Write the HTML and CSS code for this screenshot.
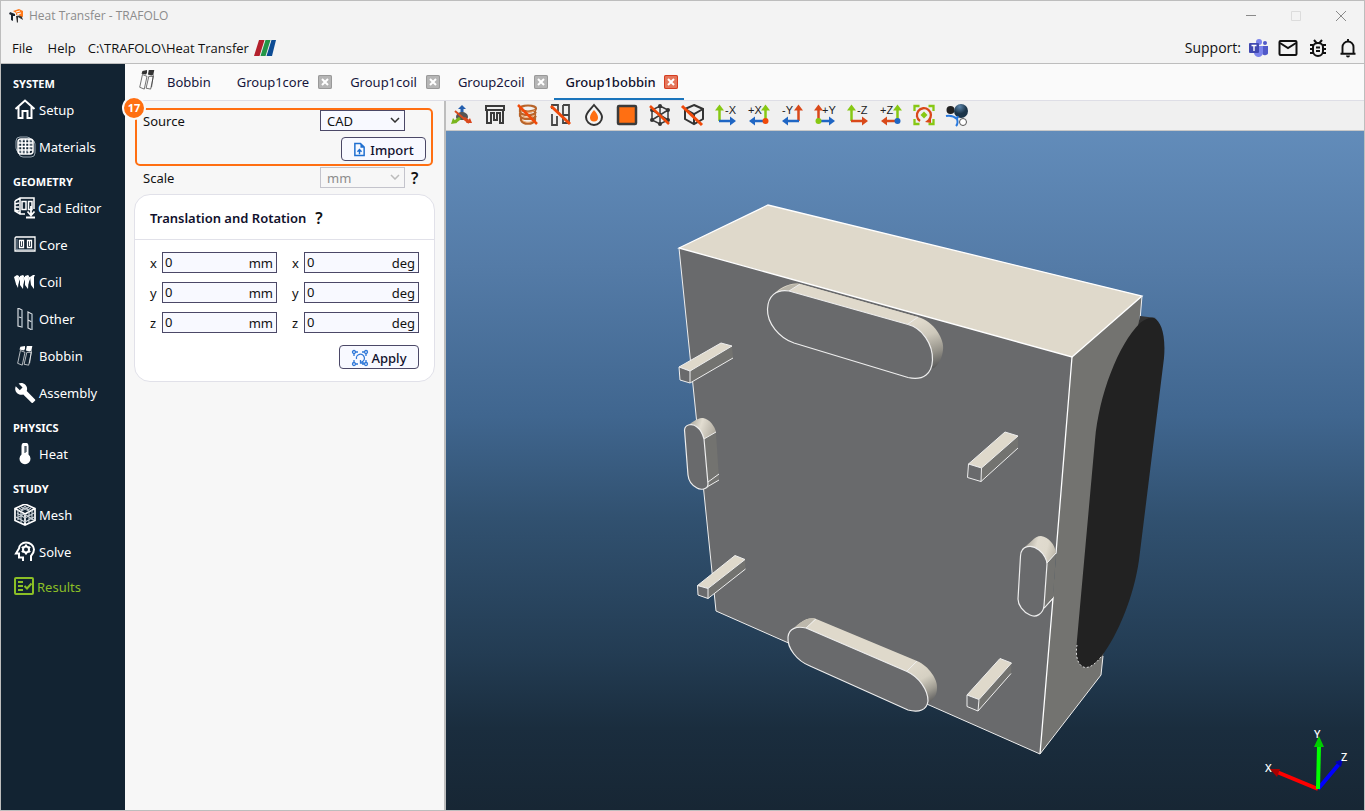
FILE: index.html
```html
<!DOCTYPE html>
<html lang="en">
<head>
<meta charset="utf-8">
<title>Heat Transfer - TRAFOLO</title>
<link rel="stylesheet" href="styles.css">
</head>
<body>
<svg class="defs" aria-hidden="true">
  <symbol id="bobbin" viewBox="0 0 22 24">
    <path d="M6 2l5-1 0 3-1 2-5-1zM13 1l6 0-1 5-2 1-4-1z" fill="currentColor"/>
    <path d="M6 6l-3 14 5 2 3-14zM13 8l-3 13 5 1 3-14zM18 6l-2 14" fill="none" stroke="currentColor" stroke-width="1" opacity=".75"/>
  </symbol>
</svg>
<div class="window">
  <header class="titlebar">
    <svg class="logo" viewBox="0 0 16 16"><path d="M1 4l5 2 0 2-2 0 0 5-2-1V7L0 6z" fill="#1c2530"/><path d="M7 8l1 7 1-1V9l5 3-1-3 1-2z" fill="#333"/><path d="M4 3l6-2 4 2v6l-3-1-1-2-3 1V5z" fill="#ff7a1a"/><path d="M7 4l4-1M8 6l4-1" stroke="#fff" stroke-width="1"/></svg>
    <span class="title">Heat Transfer - TRAFOLO</span>
    <div class="wincontrols">
      <button aria-label="Minimize"><svg viewBox="0 0 12 12"><path d="M1 5.500h10" stroke="#8a8a8a"/></svg></button>
      <button aria-label="Maximize"><svg viewBox="0 0 12 12"><path d="M1.500 1.500h9v9h-9z" fill="none" stroke="#dcdcdc"/></svg></button>
      <button aria-label="Close"><svg viewBox="0 0 12 12"><path d="M1 1l10 10M11 1L1 11" stroke="#8a8a8a"/></svg></button>
    </div>
  </header>
  <nav class="menubar">
    <button>File</button>
    <button>Help</button>
    <span class="path">C:\TRAFOLO\Heat Transfer</span>
    <svg class="stripes" viewBox="0 0 22 16"><path d="M5 0h6L6 16H0z" fill="#b3202c"/><path d="M11 0h6l-5 16H6z" fill="#229647"/><path d="M17 0h5l-4 16h-6z" fill="#0d4c94"/><path d="M11 0L6 16M17 0l-5 16" stroke="#e8e8e8" stroke-width="1"/></svg>
    <div class="support">
      <span>Support:</span>
      <a href="#" aria-label="Teams"><svg viewBox="0 0 20 20"><circle cx="11" cy="4" r="3" fill="#7b83eb"/><circle cx="17" cy="5" r="2" fill="#5059c9"/><path d="M14 8h6v5a3 3 0 0 1-6 2z" fill="#5059c9"/><path d="M6 8h9v6a4.500 4.500 0 0 1-9 1z" fill="#7b83eb"/><rect x="1" y="5" width="10" height="10" rx="1" fill="#4048b0"/><path d="M3.500 7.500h5M6 7.500v5.500" stroke="#fff" stroke-width="1.400"/></svg></a>
      <a href="#" aria-label="Mail"><svg viewBox="0 0 20 20"><rect x="1.500" y="3" width="17" height="14" rx="1" fill="none" stroke="#111" stroke-width="2"/><path d="M2 5l8 5 8-5" fill="none" stroke="#111" stroke-width="2"/></svg></a>
      <a href="#" aria-label="Report a bug"><svg viewBox="0 0 20 20"><path d="M10 5c3 0 5 2 5 4v4a5 5 0 0 1-10 0V9c0-2 2-4 5-4zM6 2l2.500 3M14 2l-2.500 3M2 7h3M15 7h3M2 11h3M15 11h3M2 15h4M14 15h4" fill="none" stroke="#111" stroke-width="2"/><path d="M8 9.500h4M8 13h4" stroke="#111" stroke-width="1.800"/></svg></a>
      <a href="#" aria-label="Notifications"><svg viewBox="0 0 20 20"><path d="M4.500 15.500V9a5.500 5.500 0 0 1 11 0v6.500M2.500 15.800h15M10 1v3" fill="none" stroke="#111" stroke-width="1.900"/><path d="M8 17.500h4a2 2 0 0 1-4 0z" fill="#111"/></svg></a>
    </div>
  </nav>
  <div class="body">
    <nav class="sidebar">
      <h2>SYSTEM</h2>
      <a href="#"><svg viewBox="0 0 22 22"><path d="M1.500 10L11 1.500l9.500 8.500M4.500 8v11h4v-7h5v7h4V8" fill="none" stroke="#fff" stroke-width="2"/></svg>Setup</a>
      <a href="#"><svg viewBox="0 0 22 22"><rect x="2" y="1" width="15" height="15" rx="4" fill="none" stroke="#9aa7b1"/><rect x="5" y="4" width="16" height="17" rx="4" fill="none" stroke="#9aa7b1"/><rect x="4" y="3" width="15" height="15" rx="3" fill="none" stroke="#fff" stroke-width="1.500"/><path d="M4 7h15M4 10.500h15M4 14h15M8 3v15M11.500 3v15M15 3v15" stroke="#fff" stroke-width="1.500"/></svg>Materials</a>
      <h2>GEOMETRY</h2>
      <a href="#" class="tight"><svg viewBox="0 0 22 22"><path d="M1 4l5-3h14v11M1 4v10l5 3h5M6 1v16M1 7l4-1M1 10h4M1 13l4 1" fill="none" stroke="#fff" stroke-width="1.500"/><path d="M8 4.500h4v8H8zM14.500 4.500H18v8h-3.500z" fill="none" stroke="#fff" stroke-width="1.500"/><path d="M17 9v9M13.500 14.500l3.500 4 3.500-4M12 20.500h9" fill="none" stroke="#fff" stroke-width="1.800"/></svg>Cad Editor</a>
      <a href="#"><svg viewBox="0 0 22 22"><path d="M2 3h19v14H1V4z" fill="none" stroke="#fff" stroke-width="1.300"/><path d="M2 15.500h18M3 5v10" stroke="#8595a1"/><path d="M5.500 6.500h4v7h-4zM13.500 6.500h4v7h-4z" fill="none" stroke="#fff" stroke-width="1.300"/><path d="M7.500 7v5M15.500 7v5" stroke="#fff"/></svg>Core</a>
      <a href="#"><svg viewBox="0 0 22 22"><path d="M0 6l3-2 2 1-1 12-2-4zM6 5l3-1 1 1-1 13-3-4zM11 5l3-1 1 1-1 13-3-4zM16 6l3-2h2l-1 2 0 12-3-4z" fill="#fff"/><path d="M3 14L6 6M8 14l3-8M13 14l3-8" stroke="#fff" stroke-width="1.500"/></svg>Coil</a>
      <a href="#"><svg viewBox="0 0 22 22"><path d="M4 0l4 2v17l-4-1zM5 9l3 1M14 4l4 2v16l-4-2zM14 12l4 2" fill="none" stroke="#d8dde2" stroke-width="1.200"/><path d="M8 2v17M18 6v16" stroke="#718391"/></svg>Other</a>
      <a href="#"><svg viewBox="0 0 22 24"><use href="#bobbin"/></svg>Bobbin</a>
      <a href="#"><svg viewBox="0 0 24 24"><path fill="#fff" d="M23 19l-9.100-9.100c.9-2.300.4-5-1.500-6.900-2-2-5-2.400-7.400-1.300L9.300 6 6.300 9 1.900 4.700C.8 7.100 1.200 10.100 3.200 12.100c1.900 1.900 4.600 2.400 6.900 1.500l9.100 9.100c.4.4 1 .4 1.400 0l2.300-2.300c.5-.4.5-1 .1-1.400z"/></svg>Assembly</a>
      <h2>PHYSICS</h2>
      <a href="#"><svg viewBox="0 0 22 22"><path d="M7.500 3a3.500 3.500 0 0 1 7 0v8.500a5.500 5.500 0 1 1-7 0z" fill="#fff"/><path d="M11 3v7M11 4h2M11 6h2M11 8h2" stroke="#1b2b39" stroke-width="1"/></svg>Heat</a>
      <h2>STUDY</h2>
      <a href="#"><svg viewBox="0 0 22 22"><path d="M11 0l10 4.500v12L11 21 1 16.500v-12zM1 4.500L11 10l10-5.500M11 10v11" fill="none" stroke="#fff" stroke-width="1.700"/><path d="M5 4l3 2 3-4 3 4 3-2M4 6v10M7 8v11M3 9l8 5M2 13l9 5M3 14l7-4M15 8v11M18 6v10M11 14l9-5M11 18l9-5M12 11l8 5M7 3l8 4M15 3L7 7" fill="none" stroke="#c5cdd3" stroke-width="1.200"/></svg>Mesh</a>
      <a href="#"><svg viewBox="0 0 22 22"><path d="M17 20v-5c2-2 3-4 3-6.500C20 4.500 16 1.500 12 1.500S5 4.500 5 7.500l-3 5h3v4h4V20" fill="none" stroke="#fff" stroke-width="2"/><circle cx="12" cy="8.500" r="3" fill="none" stroke="#fff" stroke-width="2"/><path d="M12 3.500v2M12 11.500v2M7.700 6l1.700 1M14.600 10l1.700 1M7.700 11l1.700-1M14.600 7l1.700-1" stroke="#fff" stroke-width="2"/></svg>Solve</a>
      <a href="#" class="results"><svg viewBox="0 0 22 22"><rect x="2" y="2" width="18" height="16" rx="1" fill="none" stroke="currentColor" stroke-width="2"/><path d="M5 6h5M5 10h5M5 14h5M11.500 10l2.500 2.500 4.500-5" fill="none" stroke="currentColor" stroke-width="2"/></svg>Results</a>
    </nav>
    <main class="main">
      <div class="tabs">
        <svg class="tabicon" viewBox="0 0 22 24"><use href="#bobbin"/></svg>
        <div class="tab"><button class="name">Bobbin</button></div>
        <div class="tab"><button class="name">Group1core</button><button class="x" aria-label="Close Group1core"><svg viewBox="0 0 14 14"><path d="M4 4l6 6M10 4l-6 6"/></svg></button></div>
        <div class="tab"><button class="name">Group1coil</button><button class="x" aria-label="Close Group1coil"><svg viewBox="0 0 14 14"><path d="M4 4l6 6M10 4l-6 6"/></svg></button></div>
        <div class="tab"><button class="name">Group2coil</button><button class="x" aria-label="Close Group2coil"><svg viewBox="0 0 14 14"><path d="M4 4l6 6M10 4l-6 6"/></svg></button></div>
        <div class="tab active"><button class="name">Group1bobbin</button><button class="x" aria-label="Close Group1bobbin"><svg viewBox="0 0 14 14"><path d="M4 4l6 6M10 4l-6 6"/></svg></button></div>
      </div>
      <div class="work">
        <section class="panel">
          <div class="source">
            <span class="badge">17</span>
            <div class="row"><label for="source">Source</label>
              <div class="selectwrap"><select id="source"><option>CAD</option></select><svg viewBox="0 0 10 6"><path d="M1 1l4 4 4-4"/></svg></div></div>
            <button class="btn import"><svg viewBox="0 0 14 16"><path d="M2 1.500h6l4 4v9H2z" fill="none" stroke="#1f6fd0" stroke-width="1.600"/><path d="M8 1v5h4z" fill="#1f6fd0"/><path d="M7 13V8.500M4.800 10.500L7 8l2.200 2.500" fill="none" stroke="#1f6fd0" stroke-width="1.500"/></svg>Import</button>
          </div>
          <div class="scale row"><label for="scale">Scale</label>
            <div class="selectwrap off"><select id="scale" disabled><option>mm</option></select><svg viewBox="0 0 10 6"><path d="M1 1l4 4 4-4"/></svg></div>
            <button class="help" aria-label="Scale help">?</button></div>
          <section class="card">
            <header><h3>Translation and Rotation</h3><button class="help">?</button></header>
            <div class="fields">
              <label for="tx">x</label><div class="num"><input id="tx" value="0"><span>mm</span></div>
              <label for="rx">x</label><div class="num"><input id="rx" value="0"><span>deg</span></div>
              <label for="ty">y</label><div class="num"><input id="ty" value="0"><span>mm</span></div>
              <label for="ry">y</label><div class="num"><input id="ry" value="0"><span>deg</span></div>
              <label for="tz">z</label><div class="num"><input id="tz" value="0"><span>mm</span></div>
              <label for="rz">z</label><div class="num"><input id="rz" value="0"><span>deg</span></div>
            </div>
            <button class="btn apply"><svg viewBox="0 0 18 18"><g fill="none" stroke="#2f78d8" stroke-width="1.300"><circle cx="3" cy="3" r="1.500"/><circle cx="15" cy="3" r="1.500"/><circle cx="3" cy="15" r="1.500"/><circle cx="15" cy="15" r="1.500"/><path d="M5 3h2M11 3h2M5 15h2M11 15h2M3 5v2M3 11v2M15 5v2M15 11v2"/><path d="M5.500 10a4 4 0 1 1 5 3M9.500 11v3h3.500"/></g></svg>Apply</button>
          </section>
        </section>
        <section class="view">
          <div class="toolbar">
            <button aria-label="Axes"><svg viewBox="0 0 22 22"><path d="M11 8V5" stroke="#245fae" stroke-width="3"/><path d="M7 5l4-4 4 4z" fill="#245fae"/><path d="M5 13c0-3 3-5 6-5s6 2 6 5-4 3-6 3-6 0-6-3z" fill="#555"/><path d="M9 14l-5 4" stroke="#79b51c" stroke-width="3"/><path d="M0 20l2-6 4 5z" fill="#79b51c"/><path d="M13 14l4 3" stroke="#d9451d" stroke-width="3"/><path d="M21 19l-6 0 4-5z" fill="#d9451d"/><path d="M4 7l14 12" stroke="#d94a1c" stroke-width="2"/></svg></button>
            <button aria-label="Core"><svg viewBox="0 0 22 22"><path d="M2 2h18v4H2zM3 6v13h4V9h3v7h3V9h3v10h3V6" fill="none" stroke="#3b3b3b" stroke-width="2"/></svg></button>
            <button aria-label="Coil"><svg viewBox="0 0 22 22"><g fill="none" stroke="#b8642a" stroke-width="2.200"><ellipse cx="11" cy="4.500" rx="8" ry="3"/><path d="M3 5v3c2 4 14 4 16 0M3 9v3c2 4 14 4 16 0M4 13v3c2 5 12 5 14 0V6"/></g><path d="M4 6c3 3 11 3 14 0M4 11c3 3 11 3 14 0M5 16c3 3 9 3 12 0" fill="none" stroke="#f0a160"/><path d="M1 1l19 19" stroke="#f04a0a" stroke-width="2.500"/></svg></button>
            <button aria-label="Other parts"><svg viewBox="0 0 22 22"><path d="M2 5V1h6v8M2 10v11h5v-9M13 1h6v18h-6v-8h6M13 1v10" fill="none" stroke="#444" stroke-width="1.800"/><path d="M1 2l19 18" stroke="#f04a0a" stroke-width="3"/></svg></button>
            <button aria-label="Heat"><svg viewBox="0 0 22 22"><path d="M11 1c4 5 8 8 8 12a8 8 0 0 1-16 0c0-4 4-7 8-12z" fill="#f5f5f5" stroke="#333" stroke-width="2"/><path d="M11 6c2.500 3 4 5 4 7.500a4 4 0 0 1-8 0c0-2.500 1.500-4.500 4-7.500z" fill="#ff6f12"/></svg></button>
            <button aria-label="Surface"><svg viewBox="0 0 22 22"><rect x="2" y="2" width="18" height="18" rx="1" fill="#ff6f12" stroke="#3b3b3b" stroke-width="2.500"/></svg></button>
            <button aria-label="Mesh"><svg viewBox="0 0 22 22"><path d="M11 2l8 4v10l-8 4-8-4V6zM3 6l8 5 8-5M11 11v9M3 16l8-5 8 5M11 2v9" fill="none" stroke="#3b3b3b" stroke-width="1.500"/><g fill="#333"><circle cx="11" cy="2" r="2"/><circle cx="19" cy="6" r="2"/><circle cx="19" cy="16" r="2"/><circle cx="11" cy="20" r="2"/><circle cx="3" cy="16" r="2"/><circle cx="3" cy="6" r="2"/></g><path d="M1 2l19 18" stroke="#f04a0a" stroke-width="2.500"/></svg></button>
            <button aria-label="Wireframe"><svg viewBox="0 0 22 22"><path d="M12 1l9 4v10l-9 5-9-5V5zM3 5l9 5 9-5M12 10v10" fill="none" stroke="#333" stroke-width="2"/><path d="M0 2l20 19" stroke="#f04a0a" stroke-width="3"/></svg></button>
            <button aria-label="View -X"><svg viewBox="0 0 22 22"><path d="M4.500 17V5" stroke="#87c814" stroke-width="2.500"/><path d="M0 6.500l4.500-6 4.500 6z" fill="#87c814"/><path d="M4 17h13" stroke="#1f66c4" stroke-width="2.500"/><path d="M15 12.500l6 4.500-6 4.500z" fill="#1f66c4"/><text x="10" y="10">-X</text></svg></button>
            <button aria-label="View +X"><svg viewBox="0 0 22 22"><path d="M17.500 17V5" stroke="#87c814" stroke-width="2.500"/><path d="M13 6.500l4.500-6 4.500 6z" fill="#87c814"/><path d="M17 17H5" stroke="#1f66c4" stroke-width="2.500"/><path d="M7 12.500L1 17l6 4.500z" fill="#1f66c4"/><circle cx="17.500" cy="17" r="3" fill="#f04a0a"/><text x="0" y="10">+X</text></svg></button>
            <button aria-label="View -Y"><svg viewBox="0 0 22 22"><path d="M17.500 17V5" stroke="#d9491a" stroke-width="2.500"/><path d="M13 6.500l4.500-6 4.500 6z" fill="#d9491a"/><path d="M18 17H5" stroke="#1f66c4" stroke-width="2.500"/><path d="M7 12.500L1 17l6 4.500z" fill="#1f66c4"/><text x="1" y="10">-Y</text></svg></button>
            <button aria-label="View +Y"><svg viewBox="0 0 22 22"><path d="M4.500 17V5" stroke="#d9491a" stroke-width="2.500"/><path d="M0 6.500l4.500-6 4.500 6z" fill="#d9491a"/><path d="M4 17h13" stroke="#1f66c4" stroke-width="2.500"/><path d="M15 12.500l6 4.500-6 4.500z" fill="#1f66c4"/><circle cx="4.500" cy="17" r="3" fill="#87c814"/><text x="8" y="10">+Y</text></svg></button>
            <button aria-label="View -Z"><svg viewBox="0 0 22 22"><path d="M4.500 17V5" stroke="#87c814" stroke-width="2.500"/><path d="M0 6.500l4.500-6 4.500 6z" fill="#87c814"/><path d="M4 17h13" stroke="#d9491a" stroke-width="2.500"/><path d="M15 12.500l6 4.500-6 4.500z" fill="#d9491a"/><text x="10" y="10">-Z</text></svg></button>
            <button aria-label="View +Z"><svg viewBox="0 0 22 22"><path d="M17.500 17V5" stroke="#87c814" stroke-width="2.500"/><path d="M13 6.500l4.500-6 4.500 6z" fill="#87c814"/><path d="M17 17H5" stroke="#d9491a" stroke-width="2.500"/><path d="M7 12.500L1 17l6 4.500z" fill="#d9491a"/><circle cx="17.500" cy="17" r="3" fill="#1f66c4"/><text x="0" y="10">+Z</text></svg></button>
            <button aria-label="Fit view"><svg viewBox="0 0 22 22"><path d="M1.500 7V2h5M15.500 2h5v5M1.500 15v5h5M15.500 20h5v-5" fill="none" stroke="#87c814" stroke-width="2.300"/><path d="M11 7.500l3.500 3.500-3.500 3.500L7.500 11z" fill="#87c814"/><path d="M7 17a7 7 0 1 1 9-1" fill="none" stroke="#d9491a" stroke-width="2.300"/><path d="M12 18l6-5v6z" fill="#d9491a"/></svg></button>
            <button aria-label="Background"><svg viewBox="0 0 22 22"><defs><radialGradient id="ball" cx=".4" cy=".2"><stop offset="0" stop-color="#5c86ac"/><stop offset="1" stop-color="#1b3448"/></radialGradient></defs><circle cx="4.500" cy="6" r="4" fill="#222"/><circle cx="15" cy="7" r="7" fill="url(#ball)"/><circle cx="17" cy="18" r="3.500" fill="#fff" stroke="#555"/><path d="M0 12c5-1 9 1 11 3M11 15c1 3 1 5-1 7M11 15l1-3" fill="none" stroke="#2879df" stroke-width="2"/></svg></button>
          </div>
          <div class="canvas">
            <svg class="model" viewBox="446 131 918 679" role="img" aria-label="Bobbin model">
              <defs>
                <linearGradient id="c1" gradientUnits="userSpaceOnUse" x1="925" y1="320" x2="941" y2="368"><stop offset="0" stop-color="#dfd9cb"/><stop offset=".3" stop-color="#cdc8bb"/><stop offset=".65" stop-color="#96938a"/><stop offset="1" stop-color="#505153"/></linearGradient>
                <linearGradient id="c2" gradientUnits="userSpaceOnUse" x1="913" y1="664" x2="934" y2="702"><stop offset="0" stop-color="#dfd9cb"/><stop offset=".4" stop-color="#d5d0c2"/><stop offset=".7" stop-color="#a19e94"/><stop offset="1" stop-color="#59595a"/></linearGradient>
                <linearGradient id="c3" gradientUnits="userSpaceOnUse" x1="688" y1="426" x2="716" y2="436"><stop offset="0" stop-color="#aaa79d"/><stop offset=".4" stop-color="#e2ddd1"/><stop offset="1" stop-color="#aaa59a"/></linearGradient>
                <linearGradient id="c4" gradientUnits="userSpaceOnUse" x1="1022" y1="546" x2="1056" y2="555"><stop offset="0" stop-color="#9a978e"/><stop offset=".4" stop-color="#e0dbcf"/><stop offset=".7" stop-color="#ded9cc"/><stop offset="1" stop-color="#bbb6a9"/></linearGradient>
              </defs>
              <path class="side" d="M1072 357l70-61-41 379-61 79z"/>
              <path class="front" d="M679 248l393 109-32 397-324-143z"/>
              <path class="top" d="M679 248l89-43 374 91-70 61z"/>
              <path class="edge" d="M679 248l89-43 374 91-70 61z"/>
              <path class="edge" d="M1072 357l-16 196-9 10M1044 608l9-10-13 156"/>
              <path class="thin" d="M679 248l37 363 324 143 61-79 2-19M1142 296l-2 24"/>
              <path d="M1140 316l16 2-18 8z" fill="#333"/>
              <path d="M1154 318C1161 321 1166 335 1164 358L1139 560C1134 596 1118 635 1101 657C1092 668 1084 671 1079 663C1076 658 1076 650 1077 640L1095 440C1099 395 1118 345 1140 323C1145 319 1150 317 1154 318Z" fill="#222"/>
              <path d="M1101 657C1092 668 1084 671 1079 663C1076 658 1076 650 1077 645" fill="none" stroke="#ddd" stroke-dasharray="2 2"/>
              <path d="M774 294C780 288 790 282 800 284L918 317C934 321 945 340 943 350C942 358 939 364 934 368L908 377Z" fill="url(#c1)"/>
              <path class="top" d="M789 291l11-7 118 33-10 7.500z"/>
              <path d="M771 297C777 291 787 283 800 284l-11 7z" fill="#b9b5a9"/>
              <path class="thin" d="M789 291l11-7M908 324l10-7"/>
              <path class="front edge2" d="M789 291L908 324.500C922 328 933 344 932.500 360C932 373 924 381 908 377.500L794 343C779 338 767 323 767.500 309C768 296 776 289 789 291Z"/>
              <path d="M791 632C797 624 806 617 815 618.500L917 661C929 666 938 680 937 688C937 695 934 699 928 704L907 705Z" fill="url(#c2)"/>
              <path d="M791 632C797 624 806 617 815 618.500l-9 9.500z" fill="#bdb8ac"/>
              <path class="thin" d="M806 628l10-9M907 671l10-10"/>
              <path class="front edge2" d="M806 628L907 671.500C919 677 928 690 928 701C927 710 919 713 908 710L810 666C797 661 787 648 788 637C789 628 797 626 806 628Z"/>
              <path class="side" d="M700 430l16 3 3 46-11 9z"/>
              <path d="M686 426C692 423 698 417 703 418C710 419 715 427 716 432L704 439Z" fill="url(#c3)"/>
              <path class="thin" d="M704 439l12-7M708 482l11-8M707 487l12-7"/>
              <path class="front edge2" d="M684.500 430C685 424 693 423 697 427C701 430 703 435 704 439L708 484C708 490 700 490 697 488C691 485 688.500 480 688 475Z"/>
              <path class="side" d="M1047 563l9-10-3 45-9 10z"/>
              <path d="M1022 549C1030 544 1034 536 1041 536C1049 537 1055 545 1056 553L1047 563Z" fill="url(#c4)"/>
              <path class="thin" d="M1056 553l-9 10M1044 608l9-10"/>
              <path class="front edge2" d="M1020.500 556C1021 545 1032 544 1039 550C1044 554 1047 560 1047 564L1044 606C1043 614 1036 618 1030 615C1023 612 1018 605 1018 599Z"/>
              <g class="pin"><path class="side" d="M690 371l42-25 1 12-43 25z"/><path class="top" d="M679 367l42-24 11 3-42 25z"/><path class="front" d="M679 367l11 4v12l-10-3z"/><path class="thin" d="M690 383l43-25"/></g>
              <g class="pin"><path class="side" d="M981.500 468l36.500-32v12l-37 33.500z"/><path class="top" d="M968.500 464l36.500-32 13 4-36.500 32z"/><path class="front" d="M968.500 464l13 4-.5 13.500-13.500-4z"/><path class="thin" d="M981 481.500l37-33.500"/></g>
              <g class="pin"><path class="side" d="M708 588.500l37-29 .5 9.500-37.500 29.500z"/><path class="top" d="M697.500 585.500l37.500-30 10 4-37 29z"/><path class="front" d="M697.500 585.500l10.500 3v10l-10-3.500z"/><path class="thin" d="M708 598.500l37.500-29.500"/></g>
              <g class="pin"><path class="side" d="M979 699.500l32.500-36.500-.5 10.500-33 37.500z"/><path class="top" d="M967 695l33-36.500 11.500 4.500-32.500 36.500z"/><path class="front" d="M967 695l12 4.500-1 11.500-11-4.500z"/><path class="thin" d="M978 711l33-37.500"/></g>
            </svg>
            <svg class="axes" viewBox="0 0 120 91" role="img" aria-label="Axes"><path d="M74 70l21-25" stroke="#00f" stroke-width="4"/><path d="M99 40l-8 3 6 5z" fill="#0000b5"/><path d="M74 70L33 53" stroke="#f00" stroke-width="4"/><path d="M26 50l10 0-3 8z" fill="#a00"/><path d="M74 70l1-43" stroke="#0f0" stroke-width="4"/><path d="M75 17l5 11H70z" fill="#0c0"/><text x="21" y="53">X</text><text x="70" y="19">Y</text><text x="97" y="42">Z</text></svg>
          </div>
        </section>
      </div>
    </main>
  </div>
</div>
</body>
</html>
```

FILE: styles.css
```css
* { box-sizing: border-box; }
body { margin: 0; font: 13px/18px "Noto Sans", sans-serif; color: #111; }
button, input, select { font: inherit; color: inherit; }
button { border: 0; background: none; padding: 0; }
a { color: inherit; text-decoration: none; }
h2, h3 { margin: 0; }
svg { display: block; }
.defs { display: none; }
.window { height: 100vh; display: flex; flex-direction: column; border: 1px solid #bdbdbd; background: #f3f3f3; }

.titlebar { height: 30px; display: flex; align-items: center; padding: 0 17px 0 8px; font-family: "Open Sans", sans-serif; font-size: 12px; color: #8c8c8c; }
.logo { width: 16px; height: 16px; margin-right: 4px; }
.wincontrols { margin-left: auto; display: flex; gap: 33px; }
.wincontrols svg { width: 12px; height: 12px; }

.menubar { height: 33px; display: flex; align-items: center; padding: 1px 6px 0 11px; border-bottom: 1px solid #bdbdbd; font-family: "Open Sans", sans-serif; }
.menubar > button { margin-right: 15px; }
.path { margin: 0 5px 0 -3px; }
.stripes { width: 22px; height: 16px; }
.support { margin-left: auto; display: flex; align-items: center; gap: 10px; font-size: 14px; }
.support span { margin-right: -3px; }
.support svg { width: 20px; height: 20px; }

.body { flex: 1; display: flex; min-height: 0; }
.sidebar { width: 124px; flex: none; background: #122332; color: #fff; padding: 3px 0 0 12px; }
.sidebar h2 { height: 24px; padding-top: 9px; font-size: 11px; line-height: 15px; }
.sidebar a { height: 37px; display: flex; align-items: center; gap: 3px; padding-left: 1px; }
.sidebar svg { width: 22px; height: 22px; }
.sidebar .tight { gap: 2px; }
.sidebar .results { height: 34px; gap: 2px; padding-left: 0; color: #8bbf26; }

.main { flex: 1; min-width: 0; display: flex; flex-direction: column; background: #f7f7f7; }
.tabs { height: 37px; display: flex; align-items: stretch; padding-left: 12px; border-bottom: 1px solid #dedee6; background: #fafafa; color: #16163c; }
.tabicon { width: 20px; height: 22px; margin: 5px -2px 0 0; color: #333; }
.tab { display: flex; align-items: center; gap: 9px; padding: 2px 6px 0 12px; border-bottom: 2px solid transparent; }
.tab:nth-child(2) { padding-right: 14px; }
.x svg { width: 14px; height: 14px; background: #b5b5b5; border-radius: 2px; box-shadow: 0 0 0 1px #999 inset; }
.x path { stroke: #fff; stroke-width: 2; }
.active { gap: 8px; border-bottom-color: #1b75bc; font-weight: 500; color: #10102c; }
.active .x svg { background: #e5765b; box-shadow: 0 0 0 1px #d53c20 inset; }

.work { flex: 1; display: flex; min-height: 0; }
.panel { width: 321px; flex: none; padding: 7px 9px 0; border-right: 2px solid #bdbdbd; }
.source { position: relative; height: 58px; margin: 0 2px 0 1px; border: 2px solid #ff6f12; border-radius: 5px; padding: 0 5px 0 6px; }
.badge { position: absolute; left: -15px; top: -14px; width: 24px; height: 24px; border: 2px solid #fafafa; border-radius: 50%; background: #ff6f12; color: #fff; font-size: 11px; font-weight: 700; line-height: 20px; text-align: center; }
.row { display: flex; align-items: center; }
.row label { width: 177px; }
.selectwrap { position: relative; width: 85px; height: 21px; }
.selectwrap select { appearance: none; width: 100%; height: 100%; border: 1px solid #4b4867; border-radius: 0; background: #f8f9ff; padding: 0 6px; }
.selectwrap svg { position: absolute; right: 5px; top: 7px; width: 10px; height: 6px; fill: none; stroke: #333; stroke-width: 1.500; pointer-events: none; }
.off select { border-color: #c4c4cc; color: #8c8c8c; opacity: 1; background: #f7f7f7; }
.off svg { stroke: #bbb; }
.btn { display: flex; align-items: center; justify-content: center; gap: 4px; height: 24px; padding-top: 1px; border: 1px solid #4b4867; border-radius: 4px; background: #f8f9ff; font-weight: 500; color: #10102c; }
.import { width: 85px; margin: 6px 0 0 auto; }
.import svg { width: 13px; height: 15px; }
.scale { padding-left: 9px; margin-top: 1px; }
.help { margin-left: 6px; font-size: 16px; font-weight: 600; }
.card { margin-top: 6px; border: 1px solid #e1e1e9; border-radius: 16px; background: #fff; padding-bottom: 12px; }
.card header { height: 45px; display: flex; align-items: center; padding: 2px 15px 0; border-bottom: 1px solid #e1e1e9; }
.card h3 { font-size: 13px; font-weight: 600; line-height: 18px; color: #10102c; }
.card .help { margin-left: 9px; }
.fields { display: grid; grid-template-columns: 12px minmax(0, 1fr) 27px minmax(0, 1fr); row-gap: 9px; align-items: center; padding: 12px 15px; }
.fields label:nth-child(4n + 3) { padding-left: 15px; }
.num { display: flex; min-width: 0; height: 21px; border: 1px solid #4b4867; background: #f8f9ff; padding: 0 3px 0 2px; line-height: 21px; }
.num input { flex: 1; width: 0; min-width: 0; border: 0; padding: 0; background: none; outline: 0; }
.apply { width: 80px; margin: 0 15px 0 auto; gap: 2px; }
.apply svg { width: 18px; height: 18px; }

.view { flex: 1; min-width: 0; display: flex; flex-direction: column; }
.toolbar { height: 30px; display: flex; align-items: center; gap: 11px; padding: 0 5px 1px; background: #f0f0f0; border-bottom: 1px solid #c8c8c8; }
.toolbar svg { width: 22px; height: 22px; fill: none; overflow: visible; }
.toolbar text { font: 11px "Liberation Sans", sans-serif; fill: #222; }
.canvas { position: relative; flex: 1; min-height: 0; background: linear-gradient(#628cba 0%, #547ba7 20%, #40668f 42%, #315170 57%, #233c53 77%, #1a2d3e 88%, #172634 100%); }
.model { width: 100%; height: 100%; }
.top { fill: #dfd9cb; }
.front { fill: #696a6c; }
.side { fill: #737370; }
.edge { fill: none; stroke: #fff; stroke-width: 1.300; }
.edge2 { stroke: #eee; stroke-width: 1.200; }
.thin { fill: none; stroke: #eee; stroke-width: 1; }
.pin .top, .pin .front { stroke: #eee; stroke-width: 1; }
.axes { position: absolute; right: 0; bottom: 0; width: 120px; height: 91px; }
.axes text { font: 500 11px "Noto Sans", sans-serif; fill: #fff; }
```
